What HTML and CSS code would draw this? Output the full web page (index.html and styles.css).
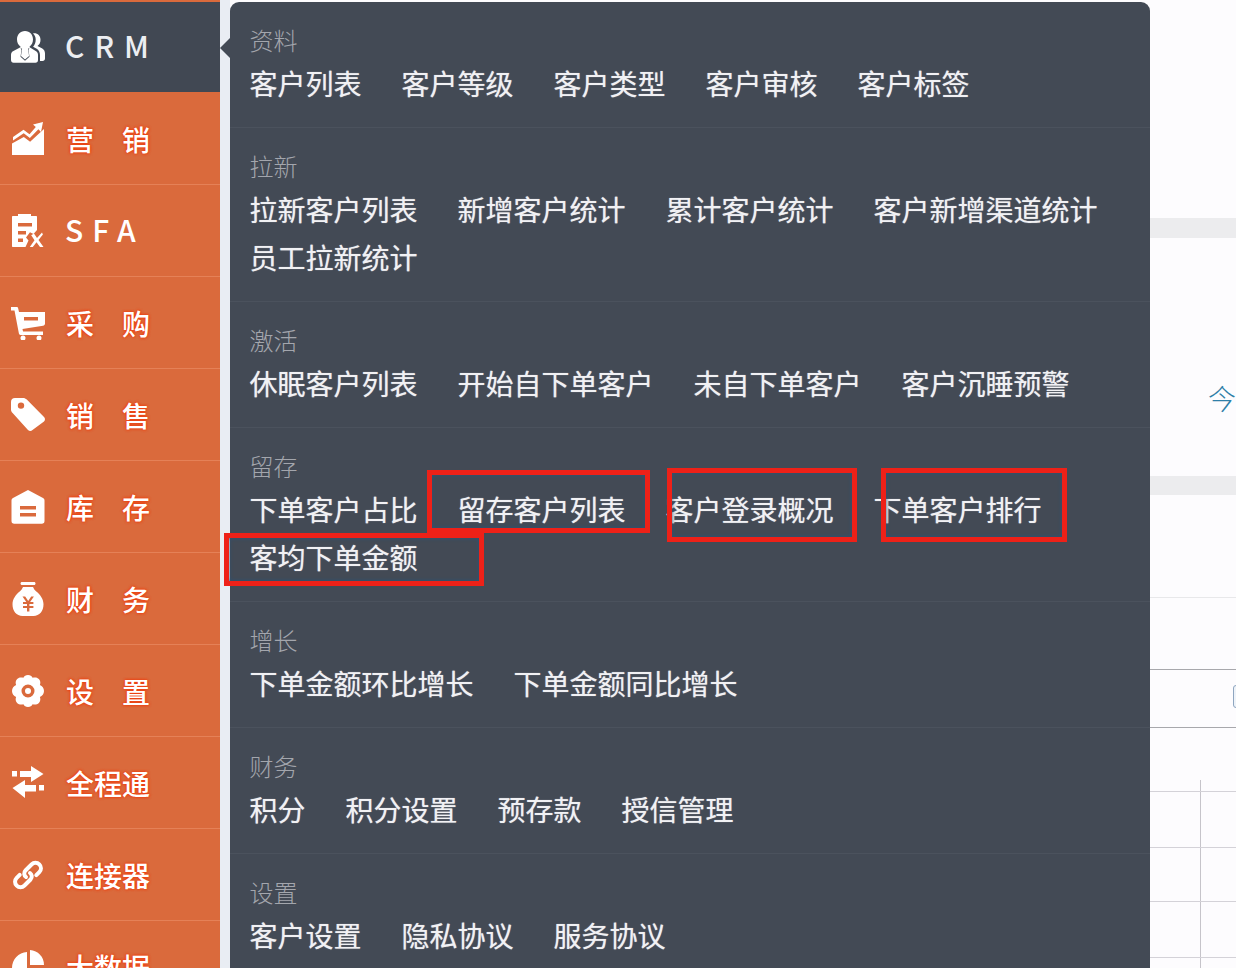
FILE: index.html
```html
<!DOCTYPE html>
<html lang="zh-CN">
<head>
<meta charset="utf-8">
<title>CRM</title>
<link rel="stylesheet" href="styles.css">
</head>
<body>
<div class="app">
  <nav class="sidebar">
    <a class="nav-item active"><svg class="ico" viewBox="0 0 34 34"><path d="M14 1c5 0 8 4 8 8.500 0 3-1.400 5.700-3.500 7.200l.8 1.800h-2.300l1.100 7.500-4.100 3.500-4-3.500 1.100-7.500H8.800l.8-1.800C7.400 15.200 6 12.500 6 9.500 6 5 9 1 14 1z"/><path d="M9 17.500 1.500 21.500C.5 22.200 0 23.500 0 25v5c0 1.500 1 2.800 2.500 2.800h22c1.500 0 2.500-1 2.500-2.800v-5c0-1.500-.5-2.800-1.500-3.500L19 17.500l-1.500 2.300 1 7-4.500 4-4.500-4 1-7z"/><path d="M22 3.500c4-.8 7.500 2 7.500 6.300 0 2.700-1.100 5-3 6.200l4.800 2.600c1.700 1 2.700 2.800 2.700 5v4.900c0 1.500-1 2.500-2.400 2.500H29v-6c0-3-1.400-5-3.300-6.200l-3.600-2c1.700-1.900 2.600-4.300 2.600-7.300 0-2.300-.9-4.600-2.700-6z"/></svg><span class="label latin">CRM</span></a>
    <a class="nav-item"><svg class="ico" viewBox="0 0 34 34"><path d="M32 0 22 2.500l2.800 2.500-6.300 7.200-6-4.500L2 15v3.500l10.700-7.300 6.200 4.700L27.400 7.200 30 10z"/><path d="M1 21.500 12.800 15l6.300 4.700L33 7v26H1z"/></svg><span class="label">营销</span></a>
    <a class="nav-item"><svg class="ico" viewBox="0 0 34 34"><path fill-rule="evenodd" d="M2 2h5V0h13v2h5c.7 0 1 .4 1 1v13l-3.500 4-3.500-1.800L15 23.500l2.500 3L14.500 33H2c-.7 0-1-.4-1-1V3c0-.6.3-1 1-1zM7 9v3.500h14V9zm0 8v3.500h8V17zm0 7.500V28h5v-3.500z"/><path d="M23 19.500 26 24l5-5.500.9 2-4.400 5.500 5 7h-3.500l-3.500-4.800-3.700 4.800h-3l4.700-6.800-3.300-5z"/></svg><span class="label latin">SFA</span></a>
    <a class="nav-item"><svg class="ico" viewBox="0 0 34 34"><path fill-rule="evenodd" d="M0 1h5.500c.9 0 1.500.5 1.700 1.400L8 6h26v11.500c0 1.300-.7 2-2 2.300L11.500 23l.5 2.500h20V29H9.500c-.9 0-1.400-.5-1.600-1.400L3.500 4.500H0zM13 11v3.500h14V11z"/><circle cx="12" cy="32" r="2.500"/><circle cx="28" cy="32" r="2.500"/></svg><span class="label">采购</span></a>
    <a class="nav-item"><svg class="ico" viewBox="0 0 34 34"><path fill-rule="evenodd" d="M0 4C0 1.500 1.500 0 4 0h8c1.600 0 2.700.5 3.800 1.600L33 19c1.300 1.300 1.300 3.200 0 4.500L21.500 32c-1.300 1.300-3.200 1.300-4.500 0L1.600 15C.5 13.900 0 12.700 0 11.500zm10 6.800a3.200 3.200 0 1 0 0-6.400 3.200 3.200 0 0 0 0 6.400z"/></svg><span class="label">销售</span></a>
    <a class="nav-item"><svg class="ico" viewBox="0 0 34 34"><path fill-rule="evenodd" d="M17 0 32 8c1 .5 1.500 1.300 1.500 2.500V31c0 1.700-1 2.700-2.700 2.700H3.200C1.500 33.700.5 32.700.5 31V10.500C.5 9.300 1 8.500 2 8zM9 16v3.500h16V16zm0 7v3.500h16V23z"/></svg><span class="label">库存</span></a>
    <a class="nav-item"><svg class="ico" viewBox="0 0 34 34"><path d="M11 0h12c1 0 1.500.6 1.500 1.500S24 3 23 3H11c-1 0-1.500-.6-1.500-1.500S10 0 11 0z"/><path fill-rule="evenodd" d="M12 5h10c1 2 1.500 3 3 4.300 4.400 3.400 7.500 8 7.500 13 0 7-4 11.700-10 11.700H11.500c-6 0-10-4.700-10-11.700 0-5 3.100-9.600 7.500-13C10.500 8 11 7 12 5zm-.5 9.500 3.800 5.500H12v2h4v2h-4v2h4v3.500h2.400V26h4v-2h-4v-2h4v-2h-3.300l3.800-5.500h-2.700L17.200 19l-3-4.500z"/></svg><span class="label">财务</span></a>
    <a class="nav-item"><svg class="ico" viewBox="0 0 34 34"><path fill-rule="evenodd" d="M17 1c2.400 0 3.600 1 4.600 2.800 2-.6 4.500-.6 6.300 1.300 1.700 1.800 1.700 4 1 5.900 2.300 1 4.100 3 4.100 6s-1.800 5-4.100 6c.7 1.900.7 4.100-1 5.900-1.800 1.900-4.300 1.900-6.300 1.300C20.600 32 19.400 33 17 33s-3.600-1-4.600-2.800c-2 .6-4.500.6-6.300-1.300-1.700-1.800-1.700-4-1-5.900C2.800 22 1 20 1 17s1.800-5 4.100-6c-.7-1.900-.7-4.100 1-5.900C7.900 3.200 10.400 3.200 12.400 3.800 13.400 2 14.600 1 17 1zm0 9.500a6.500 6.500 0 1 0 0 13 6.500 6.500 0 0 0 0-13zm0 3.500a3 3 0 1 1 0 6 3 3 0 0 1 0-6z"/></svg><span class="label">设置</span></a>
    <a class="nav-item"><svg class="ico" viewBox="0 0 34 34"><path d="M1 5h5v5.500H1zM9 5h11V0l12.500 8L20 16v-5H9zM33 19h-5v5.500h5zM25 19H14v-5L1.500 22 14 32v-6.500h11z"/></svg><span class="label">全程通</span></a>
    <a class="nav-item"><svg class="ico" viewBox="0 0 34 34"><g fill="none" stroke="#fff" stroke-width="4" stroke-linecap="round"><path d="M15 19c-2-1.500-2.500-4.500-.5-6.500l6-6c2.300-2.200 5.600-2.300 7.800-.1s2.200 5.500 0 7.700l-3 3"/><path d="M19 15c2 1.500 2.500 4.500.5 6.500l-6 6c-2.300 2.200-5.600 2.300-7.800.1s-2.200-5.500 0-7.700l3-3"/></g></svg><span class="label">连接器</span></a>
    <a class="nav-item"><svg class="ico" viewBox="0 0 34 34"><path d="M19 0c8 .5 14 7 14 15H19z"/><path d="M16 2C7.500 2.500 1 9.500 1 18c0 9 7 16 16 16 8.500 0 15-6.500 16-15H16z"/></svg><span class="label">大数据</span></a>
  </nav>

  <main class="content">
    <div class="band"></div>
    <div class="block-today"><span class="today">今</span></div>
    <div class="band band-second"></div>
    <div class="row-plain"></div>
    <div class="row-head"></div>
    <div class="row-check"><span class="checkbox"></span></div>
    <div class="grid">
      <div class="grid-row grid-first"><span class="cell"></span></div>
      <div class="grid-row grid-a"><span class="cell"></span></div>
      <div class="grid-row grid-b"><span class="cell"></span></div>
      <div class="grid-row grid-a"><span class="cell"></span></div>
      <div class="grid-row"><span class="cell"></span></div>
    </div>

    <section class="flyout">
      <div class="group">
        <h3>资料</h3>
        <div class="links"><a>客户列表</a><a>客户等级</a><a>客户类型</a><a>客户审核</a><a>客户标签</a></div>
      </div>
      <div class="group">
        <h3>拉新</h3>
        <div class="links"><a>拉新客户列表</a><a>新增客户统计</a><a>累计客户统计</a><a>客户新增渠道统计</a><a>员工拉新统计</a></div>
      </div>
      <div class="group">
        <h3>激活</h3>
        <div class="links"><a>休眠客户列表</a><a>开始自下单客户</a><a>未自下单客户</a><a>客户沉睡预警</a></div>
      </div>
      <div class="group">
        <h3>留存</h3>
        <div class="links"><a>下单客户占比</a><a>留存客户列表</a><a>客户登录概况</a><a>下单客户排行</a><a>客均下单金额</a></div>
      </div>
      <div class="group">
        <h3>增长</h3>
        <div class="links"><a>下单金额环比增长</a><a>下单金额同比增长</a></div>
      </div>
      <div class="group">
        <h3>财务</h3>
        <div class="links"><a>积分</a><a>积分设置</a><a>预存款</a><a>授信管理</a></div>
      </div>
      <div class="group">
        <h3>设置</h3>
        <div class="links"><a>客户设置</a><a>隐私协议</a><a>服务协议</a></div>
      </div>
      <span class="mark mark-1"></span>
      <span class="mark mark-2"></span>
      <span class="mark mark-3"></span>
      <span class="mark mark-4"></span>
    </section>
  </main>
</div>
</body>
</html>
```

FILE: styles.css
```css
* { box-sizing: border-box; }
html, body { margin: 0; height: 100%; overflow: hidden; }
body { font-family: "Noto Sans CJK SC", "Noto Sans", sans-serif; background: #fdfcfe; }

.app { display: flex; height: 968px; overflow: hidden; }

.sidebar {
  flex: 0 0 220px;
  background: #da6a3c;
  padding-top: 2px;
  overflow: hidden;
}
.nav-item {
  display: flex;
  align-items: center;
  gap: 21px;
  height: 92px;
  padding: 0 0 0 11px;
  border-bottom: 1px solid #e58157;
  color: #fff;
}
.nav-item.active { background: #414853; border-bottom: 0; color: #eceef2; height: 90px; }
.nav-item.active + .nav-item { height: 93px; padding-top: 1px; }
.ico { width: 34px; height: 34px; flex: none; fill: #fff; }
.label {
  font-size: 28px;
  font-weight: 500;
  line-height: 40px;
  letter-spacing: 28px;
  white-space: nowrap;
  text-shadow: 0 0 3px #f03a0a, 0 0 3px #f03a0a;
}
.nav-item:nth-child(n+9) .label { letter-spacing: 0; }
.label.latin {
  font-size: 30px;
  letter-spacing: 10px;
  font-weight: 500;
  text-shadow: none;
  padding-bottom: 4px;
  margin-left: -1px;
}
.nav-item:nth-child(3) .label.latin { letter-spacing: 9px; }

.content { position: relative; flex: 1; min-width: 0; overflow: hidden; padding-top: 218px; }
.content::before {
  content: "";
  position: absolute;
  left: 0;
  top: 0;
  bottom: 0;
  width: 10px;
  background: #e9edf3;
}
.band { height: 20px; background: #ececee; }
.block-today { height: 238px; padding: 140px 0 0 988px; white-space: nowrap; }
.today { font-size: 28px; line-height: 40px; color: #2f7fa8; font-weight: 300; }
.band-second { height: 19px; }
.row-plain { height: 103px; border-bottom: 1px solid #e8e8ea; }
.row-head { height: 72px; border-bottom: 1px solid #a8a8ac; }
.row-check { height: 58px; padding: 15px 0 0 1013px; border-bottom: 1px solid #a8a8ac; }
.checkbox {
  display: block;
  width: 24px;
  height: 23px;
  border: 1px solid #8fa6c0;
  border-radius: 3px;
  background: #eef3f9;
}
.grid { margin-top: 52px; }
.grid-row { display: flex; height: 56px; border-bottom: 1px solid #d4d2d8; }
.grid-first { height: 12px; }
.grid-b { height: 54px; }
.cell { flex: 0 0 981px; border-right: 1px solid #c6c4ca; }

.flyout {
  position: absolute;
  left: 10px;
  top: 2px;
  width: 920px;
  min-height: 980px;
  background: #434a55;
  border-radius: 9px 9px 0 0;
}
.flyout::before {
  content: "";
  position: absolute;
  left: -10px;
  top: 36px;
  border: 10px solid transparent;
  border-left: 0;
  border-right-color: #434a55;
}
.group { padding: 19px 20px 20px 19.500px; border-bottom: 1px solid #4b525d; }
.group h3 {
  margin: 0;
  font-size: 24px;
  line-height: 38px;
  font-weight: 300;
  color: #a3a6ad;
}
.links { display: flex; flex-wrap: wrap; column-gap: 40px; }
.links a {
  font-size: 28px;
  line-height: 48px;
  color: #f1f1f4;
  white-space: nowrap;
  text-shadow: 0 0 1px rgba(255, 255, 255, .6);
}

.mark {
  position: absolute;
  border: 5px solid #ee2118;
  box-shadow: inset 0 0 4px #27567c;
}
.mark-1 { left: 197px; top: 468px; width: 223px; height: 63px; }
.mark-2 { left: -6px; top: 531px; width: 260px; height: 53px; }
.mark-3 { left: 437px; top: 466px; width: 190px; height: 74px; }
.mark-4 { left: 651px; top: 466px; width: 186px; height: 74px; }
```
